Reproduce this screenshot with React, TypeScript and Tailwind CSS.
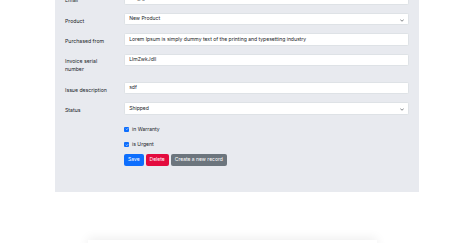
import React from "react";

const font = { fontFamily: "Inter, 'Noto Sans', sans-serif" };

function Chevron() {
  return (
    <svg width="4" height="3" viewBox="0 0 16 10" className="absolute right-[4px] top-[5px]">
      <path d="M2 2l6 6 6-6" fill="none" stroke="#343a40" strokeWidth="2.5" strokeLinecap="round" strokeLinejoin="round" />
    </svg>
  );
}

function Row({ label, value, select }: { label: React.ReactNode; value: string; select?: boolean }) {
  return (
    <div className="flex items-start">
      <div className="w-[59px] shrink-0 pt-[4.6px] text-[5.2px] leading-[7.8px] text-[#212529]">{label}</div>
      <div className="relative flex h-[12.3px] flex-1 items-center rounded-[1.6px] border-[0.5px] border-[#dee2e6] bg-white pl-[4.2px] text-[5.05px] text-[#212529]">
        {value}
        {select && <Chevron />}
      </div>
    </div>
  );
}

function Check({ label }: { label: string }) {
  return (
    <div className="flex h-[7.8px] items-center text-[5.1px] text-[#212529]">
      <span className="flex h-[5px] w-[5px] items-center justify-center rounded-[1px] bg-[#0d6efd]">
        <svg width="4" height="4" viewBox="0 0 20 20">
          <path d="M6 10l3 3 6-6" fill="none" stroke="#fff" strokeWidth="3" strokeLinecap="round" strokeLinejoin="round" />
        </svg>
      </span>
      <span className="ml-[3px]">{label}</span>
    </div>
  );
}

export default function App() {
  return (
    <div className="h-[243px] w-[474px] overflow-hidden bg-white" style={font}>
      <div className="ml-[55px] flex w-[364px] flex-col bg-[#e8eaef] px-[10px] pb-[25.7px]">
        <div className="mt-[-7.3px] flex flex-col gap-[8px]">
          <Row label="Email" value="sdf@gmail.com" />
          <Row label="Product" value="New Product" select />
          <Row label="Purchased from" value="Lorem Ipsum is simply dummy text of the printing and typesetting industry" />
          <Row label={<>Invoice serial<br />number</>} value="LlmZwkJdll" />
          <Row label="Issue description" value="sdf" />
          <Row label="Status" value="Shipped" select />
        </div>
        <div className="ml-[59px] mt-[10.6px] flex flex-col gap-[7.5px]">
          <Check label="in Warranty" />
          <Check label="is Urgent" />
        </div>
        <div className="ml-[59px] mt-[5px] flex gap-[2px]">
          <button className="h-[12.3px] rounded-[2px] bg-[#0d6efd] px-[4px] text-[5px] text-white">Save</button>
          <button className="h-[12.3px] rounded-[2px] bg-[#e30b3e] px-[4px] text-[5px] text-white">Delete</button>
          <button className="h-[12.3px] rounded-[2px] bg-[#6c757d] px-[4px] text-[5px] text-white">Create a new record</button>
        </div>
      </div>
      <div className="ml-[88px] mt-[48px] h-[100px] w-[289px] bg-white shadow-[0_-2px_10px_rgba(0,0,0,0.07)]" />
    </div>
  );
}
